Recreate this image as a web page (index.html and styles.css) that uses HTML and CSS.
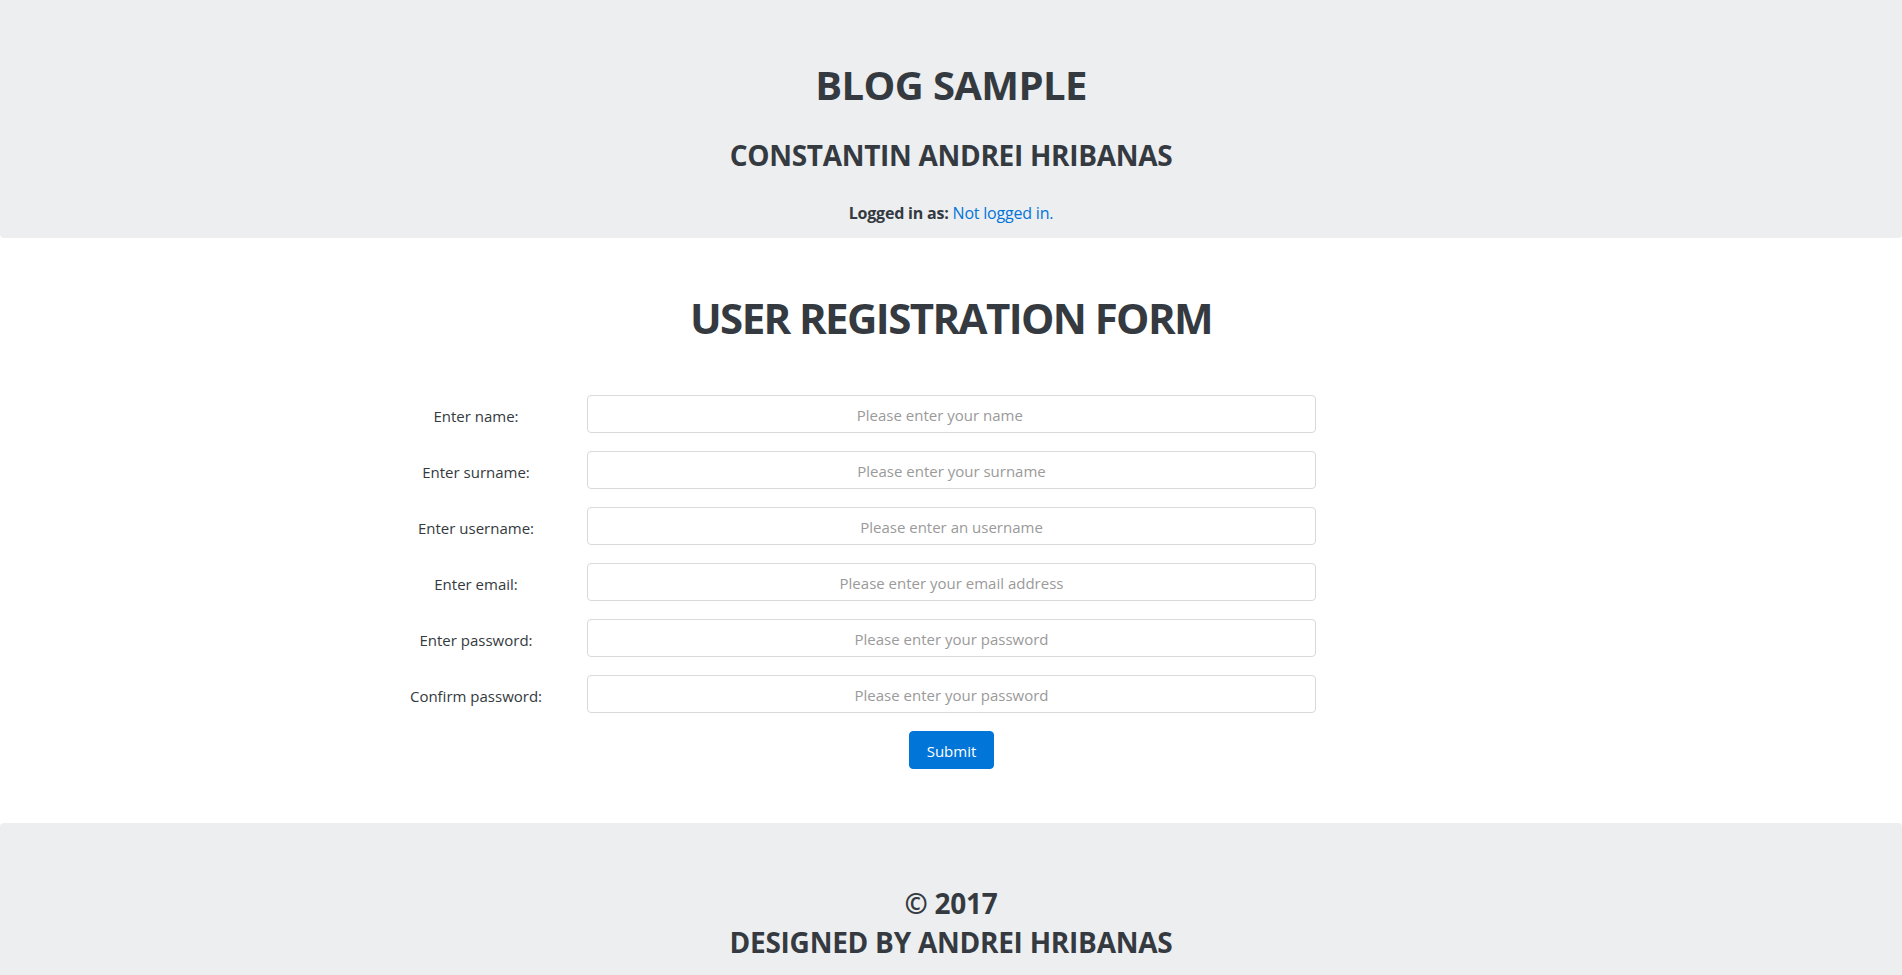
FILE: index.html
```html
<!DOCTYPE html>
<html lang="en">
<head>
<meta charset="utf-8">
<title>Blog Sample - Registration</title>
<link rel="stylesheet" href="styles.css">
</head>
<body>
<header class="jumbo header">
  <h1 class="site-title">BLOG SAMPLE</h1>
  <h3 class="site-author">CONSTANTIN ANDREI HRIBANAS</h3>
  <p class="login-status"><strong>Logged in as:</strong> <a href="#" class="login-link">Not logged in.</a></p>
</header>

<main class="content">
  <h1 class="form-title">USER REGISTRATION FORM</h1>
  <form class="reg-form">
    <div class="form-row">
      <label class="form-label" for="name">Enter name:</label>
      <input class="form-input" id="name" type="text" placeholder="Please enter your name&#160;&#160;&#160;&#160;&#160;&#160;">
    </div>
    <div class="form-row">
      <label class="form-label" for="surname">Enter surname:</label>
      <input class="form-input" id="surname" type="text" placeholder="Please enter your surname">
    </div>
    <div class="form-row">
      <label class="form-label" for="username">Enter username:</label>
      <input class="form-input" id="username" type="text" placeholder="Please enter an username">
    </div>
    <div class="form-row">
      <label class="form-label" for="email">Enter email:</label>
      <input class="form-input" id="email" type="email" placeholder="Please enter your email address">
    </div>
    <div class="form-row">
      <label class="form-label" for="password">Enter password:</label>
      <input class="form-input" id="password" type="password" placeholder="Please enter your password">
    </div>
    <div class="form-row">
      <label class="form-label" for="confirm">Confirm password:</label>
      <input class="form-input" id="confirm" type="password" placeholder="Please enter your password">
    </div>
    <div class="form-row">
      <div class="submit-cell"><button type="button" class="btn-submit">Submit</button></div>
    </div>
  </form>
</main>

<footer class="jumbo footer">
  <h3 class="footer-line">© 2017</h3>
  <h3 class="footer-line">DESIGNED BY ANDREI HRIBANAS</h3>
</footer>
</body>
</html>
```

FILE: styles.css
```css
html, body {
  margin: 0;
  padding: 0;
}
body {
  font-family: "Open Sans", "Noto Sans", "Liberation Sans", sans-serif;
  color: #343a40;
  background: #fff;
  font-size: 16px;
}
h1, h3, p {
  margin: 0;
}
.jumbo {
  background: #eceef0;
  text-align: center;
}
.header {
  padding: 61px 0 13px;
  border-radius: 0 0 4px 4px;
}
.site-title {
  font-size: 40px;
  line-height: 48px;
  font-weight: 700;
  letter-spacing: -0.6px;
}
.site-author {
  margin-top: 29px;
  font-size: 28px;
  line-height: 34px;
  font-weight: 700;
  letter-spacing: -0.3px;
}
.login-status {
  margin-top: 29px;
  font-size: 16px;
  line-height: 24px;
  letter-spacing: -0.2px;
}
.login-status strong {
  font-weight: 700;
}
.login-link {
  color: #0275d8;
  text-decoration: none;
}
.content {
  padding: 55px 0 54px;
}
.form-title {
  text-align: center;
  font-size: 42px;
  line-height: 50px;
  font-weight: 700;
  letter-spacing: -1.6px;
}
.reg-form {
  margin-top: 52px;
  padding-left: 1px;
  display: flex;
  flex-direction: column;
  gap: 18px;
}
.form-row {
  display: grid;
  grid-template-columns: 1fr 729px 1fr;
  align-items: center;
}
.form-label {
  justify-self: end;
  width: 222px;
  padding-top: 3px;
  text-align: center;
  font-size: 15px;
  color: #343a40;
}
.form-input {
  grid-column: 2;
  box-sizing: border-box;
  height: 38px;
  width: 100%;
  border: 1px solid #d9d9d9;
  border-radius: 4px;
  background: #fff;
  font-family: inherit;
  font-size: 15px;
  text-align: center;
  color: #464a4c;
  padding: 2px 12px 0;
  outline: none;
}
.form-input::placeholder {
  color: #9a9a9a;
}
.submit-cell {
  grid-column: 2;
  display: flex;
  justify-content: center;
}
.btn-submit {
  box-sizing: border-box;
  height: 38px;
  width: 85px;
  padding: 2px 0 0;
  background: #0275d8;
  color: #fff;
  border: 1px solid #0275d8;
  border-radius: 4px;
  font-family: inherit;
  font-size: 15px;
  cursor: pointer;
}
.footer {
  padding: 61px 0 13px;
  border-radius: 4px 4px 0 0;
}
.footer-line {
  font-size: 28px;
  line-height: 39px;
  font-weight: 700;
  letter-spacing: -0.25px;
}
```
